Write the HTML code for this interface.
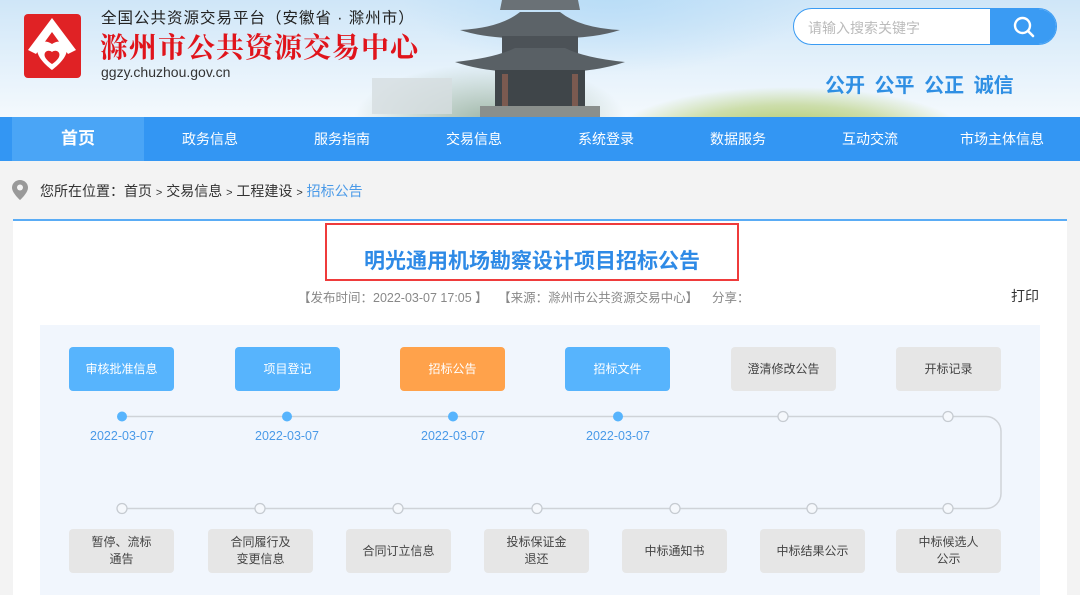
<!DOCTYPE html>
<html><head><meta charset="utf-8"><style>
*{margin:0;padding:0;box-sizing:border-box}
body{width:1080px;height:595px;overflow:hidden;background:#f3f3f3;font-family:"Liberation Sans","Noto Sans CJK SC",sans-serif;position:relative}
.abs{position:absolute}
#hdr{left:0;top:0;width:1080px;height:117px;overflow:hidden;
background:linear-gradient(180deg,#cfe6f8 0%,#e4f1fb 55%,#f4f9fd 100%)}
.nav{left:0;top:117px;width:1080px;height:44px;background:#3396f3}
.nav div{position:absolute;top:0;height:44px;line-height:44px;color:#fff;font-size:14px;text-align:center;width:132px}
.btn{position:absolute;width:105px;height:44px;border-radius:4px;font-size:12px;display:flex;align-items:center;justify-content:center;text-align:center;line-height:17px}
.b{background:#57b4fd;color:#fff}
.o{background:#ffa24b;color:#fff}
.g{background:#e6e6e6;color:#444}
.d{position:absolute;font-size:12.5px;color:#4a9ae8;width:100px;text-align:center}
</style></head><body>
<div id="hdr" class="abs">
 <div class="abs" style="left:380px;top:0;width:700px;height:117px;background:radial-gradient(ellipse 300px 120px at 230px -10px,#b7dcf7,rgba(183,220,247,0) 70%)"></div>
 <div class="abs" style="left:330px;top:30px;width:320px;height:100px;background:radial-gradient(ellipse 170px 70px at 160px 90px,#9fb7a8,rgba(159,183,168,0) 80%)"></div>
 <div class="abs" style="left:560px;top:55px;width:420px;height:80px;background:radial-gradient(ellipse 220px 60px at 230px 80px,#a8c45a,rgba(168,196,90,0.5) 50%,rgba(200,220,150,0) 80%)"></div>
 <div class="abs" style="left:372px;top:78px;width:80px;height:36px;background:#d6dde0;opacity:.8"></div>
 <svg class="abs" style="left:440px;top:0" width="200" height="117" viewBox="0 0 200 117">
  <path d="M62 0 L138 0 L140 10 L60 10Z" fill="#6a7176"/>
  <path d="M20 30 Q60 28 80 12 L120 12 Q140 28 180 30 Q150 40 100 38 Q50 40 20 30Z" fill="#5c6368"/>
  <rect x="62" y="36" width="76" height="20" fill="#4c5257"/>
  <path d="M15 62 Q55 58 75 48 L125 48 Q145 58 185 62 Q150 74 100 72 Q50 74 15 62Z" fill="#596065"/>
  <rect x="55" y="70" width="90" height="40" fill="#3f4549"/>
  <rect x="62" y="74" width="6" height="36" fill="#7b5a50"/><rect x="132" y="74" width="6" height="36" fill="#7b5a50"/>
  <rect x="40" y="106" width="120" height="11" fill="#8a8f8c"/>
 </svg>
 <svg class="abs" style="left:24px;top:14px" width="57" height="64" viewBox="0 0 57 64"><rect width="57" height="64" rx="4" fill="#e02225"/><path d="M28 4 L52 36 L44 40 L28 18 L12 40 L4 36Z" fill="#fff"/><path d="M28 30 C20 24 10 30 14 40 C17 48 28 56 28 56 C28 56 39 48 42 40 C46 30 36 24 28 30Z" fill="#fff"/><path d="M28 38 C24 35 19 38 21 43 C23 47 28 50 28 50 C28 50 33 47 35 43 C37 38 32 35 28 38Z" fill="#e02225"/></svg>
 <div class="abs" style="left:101px;top:6px;font-size:15.5px;color:#222;letter-spacing:1px">全国公共资源交易平台（安徽省 · 滁州市）</div>
 <div class="abs" style="left:100px;top:29px;font-size:28px;line-height:34px;font-weight:bold;color:#e0141b;font-family:'Noto Serif CJK SC',serif;letter-spacing:1px">滁州市公共资源交易中心</div>
 <div class="abs" style="left:101px;top:64px;font-size:14px;color:#333">ggzy.chuzhou.gov.cn</div>
 <div class="abs" style="left:793px;top:8px;width:264px;height:37px;border:1px solid #3a9bf3;border-radius:19px;background:#fff;overflow:hidden">
  <div class="abs" style="left:14px;top:9px;font-size:14px;color:#bbb">请输入搜索关键字</div>
  <div class="abs" style="left:196px;top:0;width:68px;height:37px;background:#3a9bf3"></div>
  <svg class="abs" style="left:218px;top:6px" width="24" height="24" viewBox="0 0 24 24"><circle cx="10.5" cy="10.5" r="7.5" stroke="#fff" stroke-width="2.4" fill="none"/><path d="M16 16 L21 21" stroke="#fff" stroke-width="2.6" stroke-linecap="round"/></svg>
 </div>
 <div class="abs" style="left:825px;top:69px;font-size:20px;font-weight:bold;color:#2f8fe3;word-spacing:4px">公开 公平 公正 诚信</div>
</div>
<div class="abs nav">
 <div style="left:12px;background:#4aa5f6;font-weight:bold;font-size:17px">首页</div>
 <div style="left:144px">政务信息</div><div style="left:276px">服务指南</div><div style="left:408px">交易信息</div><div style="left:540px">系统登录</div><div style="left:672px">数据服务</div><div style="left:804px">互动交流</div><div style="left:936px">市场主体信息</div>
</div>
<svg class="abs" style="left:12px;top:180px" width="16" height="20" viewBox="0 0 16 20"><path d="M8 0C3.6 0 0 3.4 0 7.6 0 13 8 20 8 20s8-7 8-12.4C16 3.4 12.4 0 8 0z" fill="#999"/><circle cx="8" cy="7.5" r="3" fill="#f3f3f3"/></svg>
<div class="abs" style="left:40px;top:181px;font-size:14px;color:#333">您所在位置：首页 <span style="font-size:11px">&gt;</span> 交易信息 <span style="font-size:11px">&gt;</span> 工程建设 <span style="font-size:11px">&gt;</span> <span style="color:#4a9ae8">招标公告</span></div>
<div class="abs" style="left:13px;top:219px;width:1054px;height:376px;background:#fff;border-top:2px solid #5aacf5"></div>
<div class="abs" style="left:325px;top:223px;width:414px;height:58px;border:2px solid #ef3b3b"></div>
<div class="abs" style="left:325px;top:245px;width:414px;text-align:center;font-size:21px;font-weight:bold;color:#2e8ae6">明光通用机场勘察设计项目招标公告</div>
<div class="abs" style="left:298px;top:287px;font-size:12.5px;color:#888;white-space:pre">【发布时间：2022-03-07 17:05 】   【来源：滁州市公共资源交易中心】    分享：</div>
<div class="abs" style="left:1011px;top:286px;font-size:14px;color:#333">打印</div>
<div class="abs" style="left:40px;top:325px;width:1000px;height:270px;background:#f1f6fd"></div>
<svg class="abs" style="left:0;top:0" width="1080" height="595">
 <path d="M122 416.5 H986 A15 15 0 0 1 1001 431.5 V493.5 A15 15 0 0 1 986 508.5 H122" fill="none" stroke="#cfd3d8" stroke-width="1.5"/>
 <g fill="#57b4fd"><circle cx="122" cy="416.5" r="5"/><circle cx="287" cy="416.5" r="5"/><circle cx="453" cy="416.5" r="5"/><circle cx="618" cy="416.5" r="5"/></g>
 <g fill="#f5f8fc" stroke="#c6cbd1" stroke-width="1.3"><circle cx="783" cy="416.5" r="5"/><circle cx="948" cy="416.5" r="5"/>
 <circle cx="122" cy="508.5" r="5"/><circle cx="260" cy="508.5" r="5"/><circle cx="398" cy="508.5" r="5"/><circle cx="537" cy="508.5" r="5"/><circle cx="675" cy="508.5" r="5"/><circle cx="812" cy="508.5" r="5"/><circle cx="948" cy="508.5" r="5"/></g>
</svg>
<div class="btn b" style="left:69px;top:347px">审核批准信息</div>
<div class="btn b" style="left:235px;top:347px">项目登记</div>
<div class="btn o" style="left:400px;top:347px">招标公告</div>
<div class="btn b" style="left:565px;top:347px">招标文件</div>
<div class="btn g" style="left:731px;top:347px">澄清修改公告</div>
<div class="btn g" style="left:896px;top:347px">开标记录</div>
<div class="d" style="left:72px;top:429px">2022-03-07</div>
<div class="d" style="left:237px;top:429px">2022-03-07</div>
<div class="d" style="left:403px;top:429px">2022-03-07</div>
<div class="d" style="left:568px;top:429px">2022-03-07</div>
<div class="btn g" style="left:69px;top:529px">暂停、流标<br>通告</div>
<div class="btn g" style="left:208px;top:529px">合同履行及<br>变更信息</div>
<div class="btn g" style="left:346px;top:529px">合同订立信息</div>
<div class="btn g" style="left:484px;top:529px">投标保证金<br>退还</div>
<div class="btn g" style="left:622px;top:529px">中标通知书</div>
<div class="btn g" style="left:760px;top:529px">中标结果公示</div>
<div class="btn g" style="left:896px;top:529px">中标候选人<br>公示</div>
</body></html>
